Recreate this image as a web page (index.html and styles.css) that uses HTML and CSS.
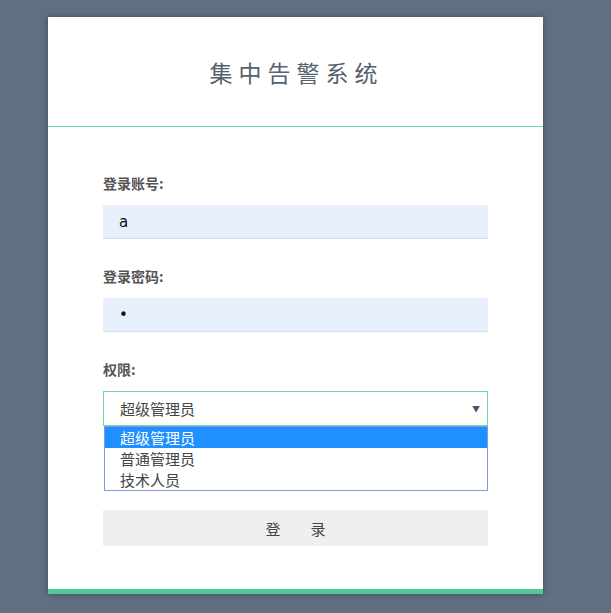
FILE: index.html
```html
<!DOCTYPE html>
<html lang="zh-CN">
<head>
    <meta charset="UTF-8">
    <meta name="viewport" content="width=device-width, initial-scale=1.0">
    <title>集中告警系统 - 登录</title>
    <link rel="stylesheet" href="styles.css">
</head>
<body>

    <!-- Login box -->
    <div class="login-box">
        <div class="login-header">
            <h1>集中告警系统</h1>
        </div>

        <form class="login-form" action="/login" method="POST">
            <div class="form-group">
                <label for="account">登录账号:</label>
                <input type="text" id="account" name="account" value="a">
            </div>

            <div class="form-group">
                <label for="password">登录密码:</label>
                <input type="password" id="password" name="password" value="a">
            </div>

            <div class="form-group">
                <label>权限:</label>
                <div class="select-wrap">
                    <div class="select-box">
                        <span>超级管理员</span>
                        <span class="arrow">&#9660;</span>
                    </div>
                    <ul class="select-list">
                        <li class="active">超级管理员</li>
                        <li>普通管理员</li>
                        <li>技术人员</li>
                    </ul>
                </div>
            </div>

            <button type="submit">登&emsp;&emsp;录</button>
        </form>
    </div>

</body>
</html>
```

FILE: styles.css
```css
* {
    margin: 0;
    padding: 0;
    box-sizing: border-box;
}

body {
    font-family: "Noto Sans CJK SC", "Noto Sans", sans-serif;
    background-color: #617080;
    height: 100vh;
    padding-top: 17px;
}

.login-box {
    width: 495px;
    margin-left: 48px;
    background-color: white;
    border-bottom: 5px solid #4ecb94;
    box-shadow: 0 0 6px rgba(0, 0, 0, 0.35);
}

.login-header {
    height: 110px;
    border-bottom: 1px solid #6fdcab;
    display: flex;
    align-items: center;
    justify-content: center;
}

.login-header h1 {
    font-size: 23px;
    font-weight: normal;
    letter-spacing: 6px;
    margin-left: 2px;
    color: #56616c;
}

.login-form {
    padding: 46px 55px 43px;
}

.form-group {
    margin-bottom: 27px;
}

.form-group label {
    display: block;
    font-size: 14px;
    line-height: 20px;
    font-weight: bold;
    color: #555;
    margin-bottom: 12px;
}

.form-group input {
    display: block;
    width: 100%;
    height: 34px;
    padding: 0 16px;
    font-family: "DejaVu Sans", sans-serif;
    font-size: 15px;
    color: #111;
    background-color: #e8f0fe;
    border: none;
    border-bottom: 1px solid #d6dde8;
    outline: none;
}

.select-wrap {
    position: relative;
    margin-top: 1px;
}

.select-box {
    height: 35px;
    padding: 0 7px 0 16px;
    border: 1px solid #6ed8a8;
    display: flex;
    align-items: center;
    justify-content: space-between;
    font-size: 15px;
    color: #444;
}

.select-box .arrow {
    font-size: 8px;
    color: #4c5662;
}

.select-list {
    position: absolute;
    top: 35px;
    left: 1px;
    right: 0;
    list-style: none;
    background-color: white;
    border: 1px solid #7f9bd8;
}

.select-list li {
    height: 21px;
    line-height: 21px;
    padding-left: 15px;
    font-size: 15px;
    color: #444;
}

.select-list li.active {
    background-color: #1e90ff;
    color: white;
}

button[type="submit"] {
    display: block;
    width: 100%;
    height: 36px;
    margin-top: 84px;
    background-color: #efefef;
    color: #444;
    font-family: "Noto Sans CJK SC", sans-serif;
    font-size: 15px;
    border: none;
    cursor: pointer;
}

button[type="submit"]:hover {
    background-color: #e4e4e4;
}
```
